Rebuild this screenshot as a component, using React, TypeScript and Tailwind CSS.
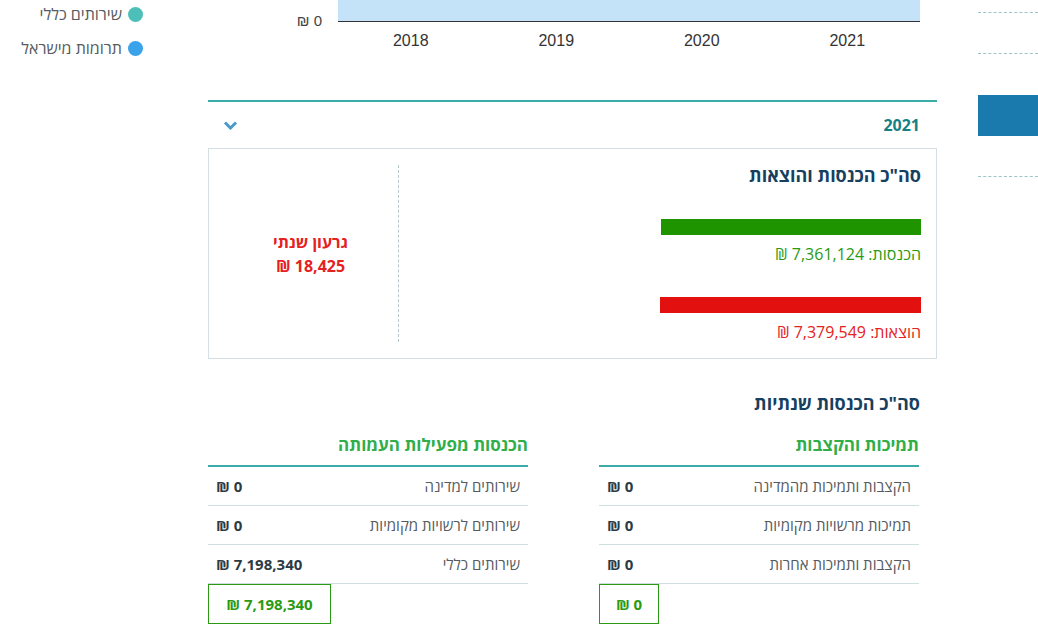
import React from "react";

const font = "font-['Open_Sans','Noto_Sans','DejaVu_Sans',sans-serif]";

function Chevron() {
  return (
    <svg width="15" height="10" viewBox="0 0 15 10" fill="none">
      <path d="M2 2.5 L7.5 8 L13 2.5" stroke="#4a9bc9" strokeWidth="3" />
    </svg>
  );
}

function Row({ label, value }: { label: string; value: string }) {
  return (
    <div className="flex items-center justify-between h-[39px] border-b border-[#cfdfe1] px-2">
      <span className="text-[15px] text-[#555b60]">{label}</span>
      <span className="text-[15px] font-bold text-[#2c3a44]">{value}</span>
    </div>
  );
}

function Column({
  title,
  rows,
  total,
  totalW,
}: {
  title: string;
  rows: [string, string][];
  total: string;
  totalW: string;
}) {
  return (
    <div className="w-[320px] flex flex-col">
      <div className="text-[17px] font-bold text-[#2fae49] leading-[24px] pb-2 border-b-2 border-[#3aaba6]">{title}</div>
      {rows.map(([l, v]) => (
        <Row key={l} label={l} value={v} />
      ))}
      <div className="flex justify-end">
        <div className={`${totalW} h-[40px] border border-[#2a9a12] flex items-center justify-center text-[15px] font-bold text-[#2a9a12]`}>
          {total}
        </div>
      </div>
    </div>
  );
}

export default function App() {
  return (
    <div className={`w-[1038px] h-[638px] overflow-hidden bg-white flex ${font}`}>
      {/* left legend */}
      <div className="w-[208px] shrink-0 flex flex-col items-end pr-[65px] pt-[3px] gap-[12px]">
        <div className="h-[22px] flex items-center gap-[6px]" dir="rtl">
          <span className="w-[15px] h-[15px] rounded-full bg-[#4dbfb9] shrink-0" />
          <span className="text-[16px] text-[#555b60]">שירותים כללי</span>
        </div>
        <div className="h-[22px] flex items-center gap-[6px]" dir="rtl">
          <span className="w-[15px] h-[15px] rounded-full bg-[#3aa3ea] shrink-0" />
          <span className="text-[16px] text-[#555b60]">תרומות מישראל</span>
        </div>
      </div>

      {/* main */}
      <div className="w-[729px] shrink-0 flex flex-col">
        {/* chart */}
        <div className="flex">
          <div className="w-[130px] pr-[16px] flex justify-end items-end">
            <span className="font-['Liberation_Sans',Arial,sans-serif] text-[15px] leading-[16px] text-[#444] mb-[-7px]" dir="rtl">0 ₪</span>
          </div>
          <div className="w-[582px] h-[22px] bg-[#c5e3f8] border-b border-[#333]" />
        </div>
        <div className="flex pl-[130px] mt-[9px]">
          {["2018", "2019", "2020", "2021"].map((y) => (
            <div key={y} className="w-[145.5px] text-center font-['Liberation_Sans',Arial,sans-serif] text-[16px] leading-[20px] text-[#333]">
              {y}
            </div>
          ))}
        </div>

        {/* section */}
        <div className="mt-[49px] border-t-2 border-[#3aaba6]" dir="rtl">
          <div className="h-[46px] flex items-center justify-between pr-[17px] pl-[15px]">
            <span className="text-[16px] font-bold text-[#178084]">2021</span>
            <Chevron />
          </div>

          <div className="h-[211px] border border-[#d3dfe2] flex">
            <div className="flex-1 pr-[15px] pt-[14px] flex flex-col items-start">
              <div className="text-[18px] font-bold leading-[24px] text-[#173f5f]">סה"כ הכנסות והוצאות</div>
              <div className="mt-[32px] w-[260px] h-[16px] bg-[#1d9400]" />
              <div className="mt-[9px] text-[16px] leading-[20px] text-[#2a9a12]">הכנסות: 7,361,124 ₪</div>
              <div className="mt-[33px] w-[261px] h-[16px] bg-[#e31010]" />
              <div className="mt-[9px] text-[16px] leading-[20px] text-[#e52121]">הוצאות: 7,379,549 ₪</div>
            </div>
            <div className="w-[190px] py-[16px] flex">
              <div className="border-r border-dashed border-[#b6c6cb] h-full" />
              <div className="flex-1 flex flex-col items-center justify-center pl-[14px]">
                <div className="text-[16px] font-bold leading-[24px] text-[#e52121]">גרעון שנתי</div>
                <div className="text-[16px] font-bold leading-[24px] text-[#e52121]">18,425 ₪</div>
              </div>
            </div>
          </div>

          <div className="mt-[32px] pr-[17px] text-[18px] font-bold leading-[24px] text-[#173f5f]">סה"כ הכנסות שנתיות</div>

          <div className="mt-[18px] pr-[18px] flex gap-[71px]">
            <Column
              title="תמיכות והקצבות"
              rows={[
                ["הקצבות ותמיכות מהמדינה", "0 ₪"],
                ["תמיכות מרשויות מקומיות", "0 ₪"],
                ["הקצבות ותמיכות אחרות", "0 ₪"],
              ]}
              total="0 ₪"
              totalW="w-[60px]"
            />
            <Column
              title="הכנסות מפעילות העמותה"
              rows={[
                ["שירותים למדינה", "0 ₪"],
                ["שירותים לרשויות מקומיות", "0 ₪"],
                ["שירותים כללי", "7,198,340 ₪"],
              ]}
              total="7,198,340 ₪"
              totalW="w-[123px]"
            />
          </div>
        </div>
      </div>

      {/* right sidebar */}
      <div className="flex-1 pl-[41px] flex flex-col">
        <div className="mt-[12px] border-t border-dashed border-[#9fc3c6]" />
        <div className="mt-[40px] border-t border-dashed border-[#9fc3c6]" />
        <div className="mt-[41px] h-[41px] bg-[#1a7aae]" />
        <div className="mt-[40px] border-t border-dashed border-[#9fc3c6]" />
      </div>
    </div>
  );
}
